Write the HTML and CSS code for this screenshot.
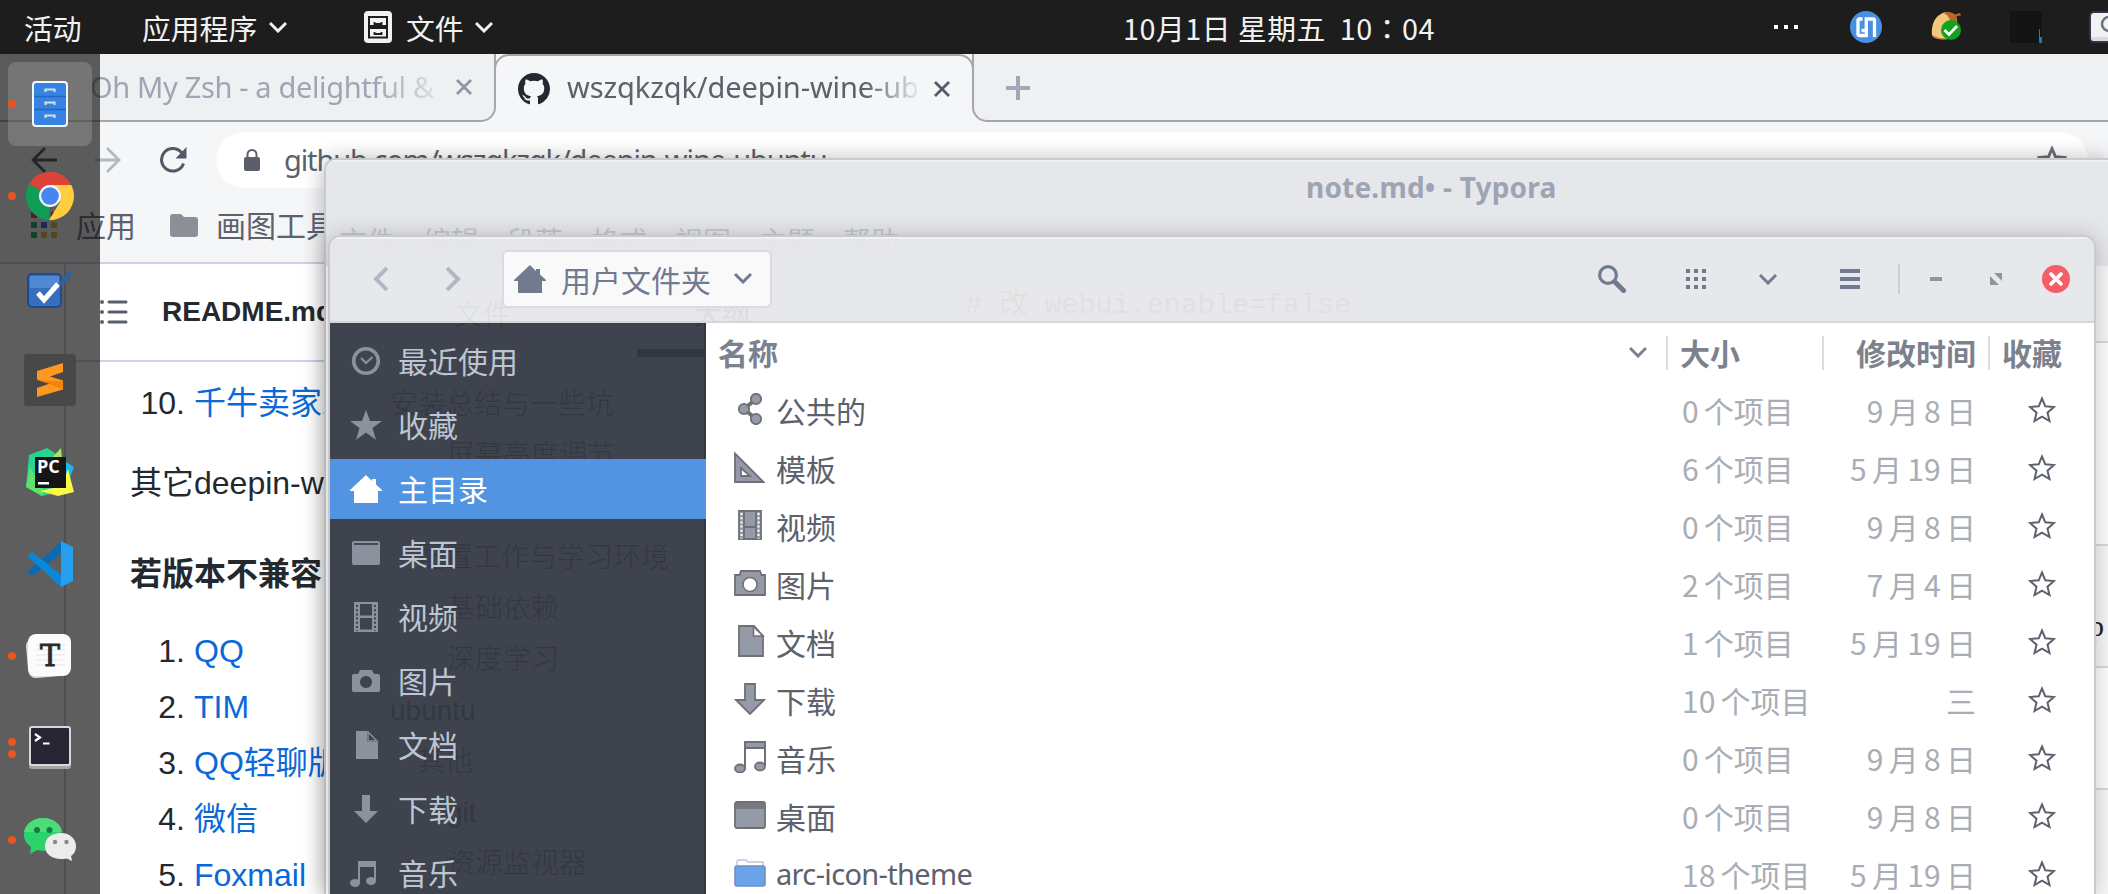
FILE: index.html
```html
<!DOCTYPE html>
<html lang="zh-CN">
<head>
<meta charset="utf-8">
<title>桌面</title>
<link rel="stylesheet" href="styles.css">
</head>
<body>
<svg class="defs" width="0" height="0">
  <symbol id="chev" viewBox="0 0 18 12"><path d="M1 2l8 8 8-8" fill="none" stroke="currentColor" stroke-width="3"/></symbol>
  <symbol id="home" viewBox="0 0 32 28"><path d="M16 0l6 6V4h4v5.500L32 15v1h-4v12H4V16H0v-1z" fill="currentColor"/></symbol>
  <symbol id="star" viewBox="0 0 28 27"><path d="M14 2.500l3.300 7.800 8.700.700-6.500 5.700 2 8.300L14 20.700 6.500 25l2-8.300L2 11l8.700-.700z" fill="none" stroke="currentColor" stroke-width="2"/></symbol>
</svg>

<header class="topbar">
  <span class="tb-act">活动</span>
  <span class="tb-apps">应用程序</span>
  <svg class="tb-chev" width="18" height="12"><use href="#chev"/></svg>
  <svg class="tb-files" width="28" height="32" viewBox="0 0 28 32"><rect width="28" height="32" rx="4" fill="#f2f2f2"/><path d="M5 6h18v9H5zM5 17h18v9.500H5z" fill="none" stroke="#1d1d1d" stroke-width="2"/><path d="M10.500 11v2h7v-2M10.500 21v2h7v-2" fill="none" stroke="#1d1d1d" stroke-width="1.800"/></svg>
  <span class="tb-title">文件</span>
  <svg class="tb-chev2" width="18" height="12"><use href="#chev"/></svg>
  <span class="tb-clock">10月1日 星期五&nbsp; 10<em lang="zh-TW">：</em>04</span>
  <svg class="tb-dots" width="24" height="4" viewBox="0 0 24 4"><path d="M0 0h4v4H0zM10 0h4v4h-4zM20 0h4v4h-4z" fill="#fff"/></svg>
  <svg class="tb-mx" width="32" height="32" viewBox="0 0 32 32"><circle cx="16" cy="16" r="16" fill="#4a90e2"/><path d="M12.500 8H9.500Q8 8 8 9.500V23q0 1.500 1.500 1.500H16.300V8H23q1.500 0 1.500 1.500V26M11.500 19.500H16" fill="none" stroke="#fff" stroke-width="3.300"/></svg>
  <svg class="tb-nut" width="30" height="30" viewBox="0 0 30 30"><path d="M10 2C3 5 0 15 1 23c1 4 9 5 16 4L24 6C20 0 14-1 10 2z" fill="#f5c67e"/><path d="M12 1c4 1 7 5 7 9h7c1-2-1-5 0-6l4-.5L29 1l-5 1.500C20-.500 16-.500 12 1z" fill="#b9682d"/><path d="M2 24q6 4 14 3" stroke="#b9682d" fill="none"/><circle cx="20" cy="18" r="10" fill="#0fa31e"/><path d="M13.500 18l4.500 4.500 8-8.500" fill="none" stroke="#fff" stroke-width="2.800"/></svg>
  <svg class="tb-box" width="32" height="32" viewBox="0 0 32 32"><path d="M0 0h32v32H0z" fill="#141414"/><path d="M29 18h1v8h2v6h-3z" fill="#0d7fd6"/></svg>
  <svg class="tb-last" width="19" height="32" viewBox="0 0 19 32"><rect x="1" y="1" width="34" height="30" rx="4" fill="#f2f2f3" stroke="#33334a" stroke-width="2"/><path d="M2 26h17v4H4z" fill="#dcdcde"/><circle cx="20" cy="13" r="7" fill="none" stroke="#6b7085" stroke-width="2.500"/></svg>
</header>

<main class="browser">
  <div class="tabstrip">
    <div class="tab idle">
      <span class="tab-name fade-a">Oh My Zsh - a delightful &amp;</span>
      <svg width="16" height="16" viewBox="0 0 16 16"><path d="M1 1l14 14M15 1L1 15" stroke="#8f96a6" stroke-width="2.800"/></svg>
    </div>
    <div class="tab live">
      <svg class="gh" width="32" height="32" viewBox="0 0 16 16"><path fill="#24292f" d="M8 0C3.580 0 0 3.580 0 8c0 3.540 2.290 6.530 5.470 7.590.4.070.55-.17.55-.38 0-.19-.01-.82-.01-1.490-2.010.37-2.530-.49-2.690-.94-.09-.23-.48-.94-.82-1.130-.28-.15-.68-.52-.01-.53.63-.01 1.080.58 1.230.82.72 1.210 1.870.87 2.330.66.07-.52.28-.87.51-1.070-1.780-.2-3.640-.89-3.640-3.950 0-.87.31-1.590.82-2.150-.08-.2-.36-1.020.08-2.120 0 0 .67-.21 2.200.82.64-.18 1.320-.27 2-.27s1.360.09 2 .27c1.530-1.040 2.200-.82 2.200-.82.44 1.100.16 1.920.08 2.120.51.56.82 1.270.82 2.150 0 3.070-1.870 3.750-3.650 3.950.29.25.54.73.54 1.480 0 1.070-.01 1.930-.01 2.200 0 .21.15.46.55.38A8.010 8.010 0 0016 8c0-4.420-3.580-8-8-8z"/></svg>
      <span class="tab-name fade-b">wszqkzqk/deepin-wine-ub</span>
      <svg width="16" height="16" viewBox="0 0 16 16"><path d="M1 1l14 14M15 1L1 15" stroke="#555b67" stroke-width="2.800"/></svg>
    </div>
    <div class="tab-rest"><svg width="24" height="24" viewBox="0 0 24 24"><path d="M0 12h24M12 0v24" stroke="#a2a8b9" stroke-width="4"/></svg></div>
  </div>
  <div class="toolbar">
    <svg class="nav-b" width="26" height="26" viewBox="0 0 26 26"><path d="M26 13H2M14 1L2 13l12 12" fill="none" stroke="#40454f" stroke-width="2.800"/></svg>
    <svg class="nav-f" width="26" height="26" viewBox="0 0 26 26"><path d="M0 13h24M12 1l12 12-12 12" fill="none" stroke="#b4b8c0" stroke-width="2.800"/></svg>
    <svg class="nav-r" width="28" height="26" viewBox="0 0 28 26"><path d="M22.500 5.500A11.300 11.300 0 1 0 24.500 16.500" fill="none" stroke="#525866" stroke-width="3"/><path d="M27.500 0v11.500H16.500z" fill="#525866"/></svg>
    <div class="omni">
      <svg width="16" height="22" viewBox="0 0 16 22"><rect y="8" width="16" height="14" rx="2" fill="#5a6069"/><path d="M3.500 9V5.500a4.500 4.500 0 0 1 9 0V9" fill="none" stroke="#5a6069" stroke-width="2"/></svg>
      <span class="url">github.com/wszqkzqk/deepin-wine-ubuntu</span>
      <svg class="omni-star" width="30" height="28" viewBox="0 0 28 27"><path d="M14 2.500l3.300 7.800 8.700.700-6.500 5.700 2 8.300L14 20.700 6.500 25l2-8.300L2 11l8.700-.700z" fill="none" stroke="#6b6e75" stroke-width="2.800"/></svg>
    </div>
  </div>
  <div class="bookmarks">
    <svg width="26" height="26" viewBox="0 0 26 26"><path d="M0 0h6v6H0zM10 0h6v6h-6zM20 0h6v6h-6z" fill="#d33"/><path d="M0 10h6v6H0zM0 20h6v6H0z" fill="#1f9a4d"/><path d="M10 10h6v6h-6z" fill="#2a54dc"/><path d="M20 10h6v6h-6zM10 20h6v6h-6zM20 20h6v6h-6z" fill="#e0b020"/></svg>
    <span class="bm-apps">应用</span>
    <svg class="bm-folder" width="28" height="24" viewBox="0 0 28 24"><path d="M3 0h8l3 3h11a3 3 0 0 1 3 3v14a3 3 0 0 1-3 3H3a3 3 0 0 1-3-3V3a3 3 0 0 1 3-3z" fill="#8b8f98"/></svg>
    <span class="bm-tools">画图工具</span>
  </div>
  <div class="page">
    <div class="readme-box">
      <div class="readme-head">
        <svg width="30" height="24" viewBox="0 0 30 24"><path d="M11 2h17M11 12h17M11 22h17" stroke="#57606a" stroke-width="3" stroke-linecap="round"/><circle cx="4" cy="2" r="2" fill="#57606a"/><circle cx="4" cy="12" r="2" fill="#57606a"/><circle cx="4" cy="22" r="2" fill="#57606a"/></svg>
        <b>README.md</b>
      </div>
      <div class="row first"><i>10.</i><a>千牛卖家工作台</a></div>
      <p class="para">其它deepin-wine</p>
      <p class="para strong">若版本不兼容</p>
      <div class="row"><i>1.</i><a>QQ</a></div>
      <div class="row"><i>2.</i><a>TIM</a></div>
      <div class="row"><i>3.</i><a>QQ轻聊版</a></div>
      <div class="row"><i>4.</i><a>微信</a></div>
      <div class="row"><i>5.</i><a>Foxmail</a></div>
    </div>
  </div>
</main>

<aside class="dock">
  <div class="slot active"><span class="pips"><u></u></span>
    <svg width="36" height="46" viewBox="0 0 36 46"><rect x="1" y="1" width="34" height="44" rx="3" fill="#3584e4" stroke="#f4f8fd" stroke-width="2"/><path d="M2 15.500h32M2 28.500h32" stroke="#1f66c4" stroke-width="1.500"/><path d="M13.500 11V8.500h9V11M13.500 24v-2.500h9V24M13.500 37v-2.500h9V37" fill="none" stroke="#dcdcdc" stroke-width="2.200"/></svg></div>
  <div class="slot"><span class="pips"><u></u></span>
    <svg width="50" height="50" viewBox="0 0 50 50"><path d="M25 25L4.200 13A24 24 0 0 1 45.800 13z" fill="#db4437"/><path d="M25 1a24 24 0 0 1 20.800 12.500H25z" fill="#db4437"/><path d="M25 25L4.200 13A24 24 0 0 0 24 49z" fill="#0f9d58"/><path d="M25 14h21.300A24 24 0 0 1 24 49L35 31z" fill="#ffcd40"/><circle cx="25" cy="25" r="11" fill="#f4f4f4"/><circle cx="25" cy="25" r="8.800" fill="#4587ee"/></svg></div>
  <div class="slot"><span class="pips"></span>
    <svg class="check" width="48" height="42" viewBox="0 0 48 42"><rect x="2" y="7" width="33" height="33" rx="4" fill="#356fbd" stroke="#1d4a91" stroke-width="2"/><path d="M4 9h29v12H4z" fill="#5089cf"/><path d="M12 26l6 7 14-16" fill="none" stroke="#fff" stroke-width="5"/><path d="M32 17L46 1l-2 10-9 8z" fill="#30609f"/></svg></div>
  <div class="slot"><span class="pips"></span>
    <svg width="52" height="52" viewBox="0 0 52 52"><rect width="52" height="52" rx="3" fill="#484848"/><path d="M13 17l26-8v9l-13 4.500 13 4v9L13 43v-9l13-4.500-13-4z" fill="#ff9820"/><path d="M13 26l26 1.500v8L26 30z" fill="#f0850c"/></svg></div>
  <div class="slot"><span class="pips"></span>
    <svg width="50" height="50" viewBox="0 0 50 50"><path d="M4 8l18-7 14 9-6 36-13 3L1 40z" fill="#29d391"/><path d="M1 40L5 20l14 24-2 5z" fill="#5de36b"/><path d="M36 1l1 12H25z" fill="#a6e85c"/><path d="M38 13l11 7-4 10-8-3z" fill="#1fb7ee"/><path d="M43 22l6 23-16 4-18-5 22-5z" fill="#fcf84a"/><path d="M10 10h31v31H10z" fill="#161616"/><path d="M13 35h11v2.500H13z" fill="#fff"/><text x="12" y="26" class="pc">PC</text></svg></div>
  <div class="slot"><span class="pips"></span>
    <svg width="48" height="48" viewBox="0 0 48 48"><path d="M1 32l5 4L36 13V1z" fill="#0a6ab4"/><path d="M6 12L1 16l34 31 1-12z" fill="#0d86d3"/><path d="M35 1l12 6v34l-12 6z" fill="#25a0f0"/></svg></div>
  <div class="slot"><span class="pips"><u></u></span>
    <svg class="sheet" width="48" height="46" viewBox="0 0 48 46"><rect x="3" y="4" width="42" height="40" rx="8" fill="#dedede" transform="rotate(-5 24 24)"/><rect x="4" y="1" width="43" height="42" rx="8" fill="#fcfcfc"/><path d="M12 12h29M12 17h29M12 22h29M12 27h29M12 32h29" stroke="#e5e5e5"/><text x="26" y="33" text-anchor="middle" class="ty">T</text></svg></div>
  <div class="slot"><span class="pips"><u></u><u></u></span>
    <svg width="42" height="44" viewBox="0 0 42 44"><rect y="2" width="42" height="41" rx="3" fill="#aaa5a2"/><rect x="1" y="1" width="40" height="38" rx="2" fill="#272434" stroke="#d8d8dc" stroke-width="2"/><path d="M6 8l5 3.500L6 15" fill="none" stroke="#fff" stroke-width="2.200"/><path d="M14 17.500h6.500" stroke="#fff" stroke-width="2"/></svg></div>
  <div class="slot"><span class="pips"><u></u></span>
    <svg width="52" height="46" viewBox="0 0 52 46"><path d="M19 1c10 0 19 7 19 17S30 34 19 34l-6-1-7 4 1-7C3 27 0 23 0 18 0 8 9 1 19 1z" fill="#2bd46b"/><path d="M19 1c10 0 18 6 19 14H0C2 6 10 1 19 1z" fill="#4cdd78"/><circle cx="13" cy="13" r="3" fill="#157c41"/><circle cx="25.500" cy="13" r="3" fill="#157c41"/><path d="M37 16c9 0 15 6 15 13 0 5-2 8-5 10l1 5-5-2.500c-2 .5-4 .5-6 .5-9 0-16-5-16-13s7-13 16-13z" fill="#ececec"/><circle cx="31" cy="25" r="2.200" fill="#8a8a8a"/><circle cx="42.500" cy="25" r="2.200" fill="#8a8a8a"/></svg></div>
</aside>

<section class="typora">
  <div class="ty-title">note.md• - Typora</div>
  <div class="ty-menu"><span>文件</span><span>编辑</span><span>段落</span><span>格式</span><span>视图</span><span>主题</span><span>帮助</span></div>
  <div class="ty-body">
    <div class="ty-side">
      <div class="ty-tabs"><span>文件</span><b>大纲</b></div>
      <div class="ty-bar"></div>
      <div class="o1">安装总结与一些坑</div>
      <div class="o3">屏幕亮度调节</div>
      <div class="o3">&nbsp;</div>
      <div class="o2">配置工作与学习环境</div>
      <div class="o3">基础依赖</div>
      <div class="o3">深度学习</div>
      <div class="o1">ubuntu</div>
      <div class="o2">其他</div>
      <div class="o3">git</div>
      <div class="o3">资源监视器</div>
    </div>
    <div class="ty-code"># 改 webui.enable=false</div>
    <div class="ty-table"><div></div><div></div><div>p</div><div></div><div></div></div>
  </div>
</section>

<section class="files">
  <div class="fhead">
    <svg class="f-b" width="15" height="24" viewBox="0 0 15 24"><path d="M14 1L3 12l11 11" fill="none" stroke="#b1b8c3" stroke-width="4"/></svg>
    <svg class="f-f" width="15" height="24" viewBox="0 0 15 24"><path d="M1 1l11 11L1 23" fill="none" stroke="#b1b8c3" stroke-width="4"/></svg>
    <div class="path"><svg width="32" height="28"><use href="#home"/></svg><span>用户文件夹</span><svg class="path-chev" width="18" height="12"><use href="#chev"/></svg></div>
    <svg class="f-search" width="28" height="28" viewBox="0 0 28 28"><circle cx="10" cy="10" r="8.400" fill="none" stroke="#727a8f" stroke-width="3.200"/><path d="M17 17l8.500 8.500" stroke="#727a8f" stroke-width="5" stroke-linecap="round"/></svg>
    <svg class="f-grid" width="20" height="20" viewBox="0 0 20 20"><path d="M0 0h4v4H0zM8 0h4v4H8zM16 0h4v4h-4zM0 8h4v4H0zM8 8h4v4H8zM16 8h4v4h-4zM0 16h4v4H0zM8 16h4v4H8zM16 16h4v4h-4z" fill="#727a8f"/></svg>
    <svg class="f-chev" width="18" height="12"><use href="#chev"/></svg>
    <svg class="f-menu" width="20" height="20" viewBox="0 0 20 20"><path d="M0 0h20v4H0zM0 8h20v4H0zM0 16h20v4H0z" fill="#727a8f"/></svg>
    <span class="f-sep"></span>
    <span class="f-min"></span>
    <svg class="f-max" width="12" height="12" viewBox="0 0 12 12"><path d="M4 0h8v8zM0 3v9h9z" fill="#90949d"/></svg>
    <svg class="f-close" width="28" height="28" viewBox="0 0 28 28"><circle cx="14" cy="14" r="14" fill="#f75d66"/><path d="M9 9l10 10M19 9L9 19" stroke="#fff" stroke-width="3.800" stroke-linecap="round"/></svg>
  </div>
  <div class="fbody">
    <nav class="side">
      <div><svg width="32" height="32" viewBox="0 0 32 32"><circle cx="16" cy="16" r="12.300" fill="none" stroke="currentColor" stroke-width="3.600"/><path d="M11 13l5 5 6.500-6" fill="none" stroke="currentColor" stroke-width="2.200"/></svg><span>最近使用</span></div>
      <div><svg width="32" height="32" viewBox="0 0 32 32"><path d="M16 1l4 11h12l-9.500 7L26 31l-10-7.500L6 31l3.500-12L0 12h12z" fill="currentColor"/></svg><span>收藏</span></div>
      <div class="sel"><svg width="32" height="28"><use href="#home"/></svg><span>主目录</span></div>
      <div><svg width="32" height="32" viewBox="0 0 32 32"><path d="M4 4h24a2 2 0 0 1 2 2v20a2 2 0 0 1-2 2H4a2 2 0 0 1-2-2V6a2 2 0 0 1 2-2z" fill="currentColor"/><path d="M4 7h24" stroke="#3e434e" stroke-width="1.800"/></svg><span>桌面</span></div>
      <div><svg width="32" height="32" viewBox="0 0 32 32"><path fill-rule="evenodd" d="M4 1h24v30H4zm6 2v11.500h12V3zm0 14v11.500h12V17z" fill="currentColor"/><path d="M7 4v26M25 4v26" stroke="#3e434e" stroke-width="2" stroke-dasharray="2 2.200"/></svg><span>视频</span></div>
      <div><svg width="32" height="32" viewBox="0 0 32 32"><path fill-rule="evenodd" d="M10 5h12l2 4h4a2 2 0 0 1 2 2v14a2 2 0 0 1-2 2H4a2 2 0 0 1-2-2V11a2 2 0 0 1 2-2h4zm6 6a6 6 0 1 0 .01 0z" fill="currentColor"/></svg><span>图片</span></div>
      <div><svg width="32" height="32" viewBox="0 0 32 32"><path d="M6 2h11v11h11v17H6z" fill="currentColor"/><path d="M18 3v9h9z" fill="none" stroke="currentColor" stroke-width="1.400"/></svg><span>文档</span></div>
      <div><svg width="32" height="32" viewBox="0 0 32 32"><path d="M12 2h8v16h8L16 30 4 18h8z" fill="currentColor"/></svg><span>下载</span></div>
      <div><svg width="32" height="32" viewBox="0 0 32 32"><path d="M8 4h18v20h-2V10H10v16H8z" fill="currentColor"/><ellipse cx="5" cy="26" rx="5" ry="4" fill="currentColor"/><ellipse cx="21" cy="24" rx="5" ry="4" fill="currentColor"/></svg><span>音乐</span></div>
    </nav>
    <div class="list">
      <div class="lhead">
        <span class="c-name">名称<svg width="18" height="12"><use href="#chev"/></svg></span>
        <span class="c-size">大小</span><span class="c-date">修改时间</span><span class="c-fav">收藏</span>
      </div>
      <div class="lrow"><svg class="ic" viewBox="0 0 32 32"><path d="M22 6L10 16l12 10" fill="none" stroke="#6e7074" stroke-width="4"/><g class="g"><circle cx="22" cy="6" r="5.200"/><circle cx="10" cy="16" r="5.200"/><circle cx="22" cy="26" r="5.200"/></g></svg><span class="n">公共的</span><span class="s">0 个项目</span><span class="d">9 月 8 日</span><svg class="st"><use href="#star"/></svg></div>
      <div class="lrow"><svg class="ic" viewBox="0 0 32 32"><path class="g" fill-rule="evenodd" d="M1 2.500v28.500h28.500zM7 17l9 8H7z"/></svg><span class="n">模板</span><span class="s">6 个项目</span><span class="d">5 月 19 日</span><svg class="st"><use href="#star"/></svg></div>
      <div class="lrow"><svg class="ic" viewBox="0 0 32 32"><path class="g" d="M5 2h22v28H5zM10 2v28M22 2v28M10 18h12"/><path d="M7.500 4v26M24.500 4v26" stroke="#fff" stroke-width="2" stroke-dasharray="2 2.200"/></svg><span class="n">视频</span><span class="s">0 个项目</span><span class="d">9 月 8 日</span><svg class="st"><use href="#star"/></svg></div>
      <div class="lrow"><svg class="ic" viewBox="0 0 32 32"><path class="g" d="M7 4h19l1.500 4H31v20H1V8h4.500z"/><circle cx="16" cy="17.500" r="7" fill="#fff" stroke="#6e7074" stroke-width="1.600"/></svg><span class="n">图片</span><span class="s">2 个项目</span><span class="d">7 月 4 日</span><svg class="st"><use href="#star"/></svg></div>
      <div class="lrow"><svg class="ic" viewBox="0 0 32 32"><path class="g" d="M5 1h15l9 10v20H5z"/><path d="M19.500 1.500v9.500H29z" fill="#fff" stroke="#6e7074" stroke-width="1.600"/></svg><span class="n">文档</span><span class="s">1 个项目</span><span class="d">5 月 19 日</span><svg class="st"><use href="#star"/></svg></div>
      <div class="lrow"><svg class="ic" viewBox="0 0 32 32"><path class="g" d="M11 1h10v16h9L16 31 2 17h9z"/></svg><span class="n">下载</span><span class="s">10 个项目</span><span class="d">三</span><svg class="st"><use href="#star"/></svg></div>
      <div class="lrow"><svg class="ic" viewBox="0 0 32 32"><path class="g" d="M11 1h20v6H11z"/><path d="M11 1v27M31 1v24" stroke="#6e7074" stroke-width="2"/><g class="g"><ellipse cx="6" cy="27.500" rx="5" ry="4"/><ellipse cx="26" cy="25.500" rx="5" ry="4"/></g></svg><span class="n">音乐</span><span class="s">0 个项目</span><span class="d">9 月 8 日</span><svg class="st"><use href="#star"/></svg></div>
      <div class="lrow"><svg class="ic" viewBox="0 0 32 32"><rect class="g" x="1" y="3" width="30" height="26" rx="2"/><path d="M2 4h28v6H2z" fill="#6e7074" opacity=".8"/></svg><span class="n">桌面</span><span class="s">0 个项目</span><span class="d">9 月 8 日</span><svg class="st"><use href="#star"/></svg></div>
      <div class="lrow"><svg class="ic" viewBox="0 0 32 32"><path d="M3 10V5q0-2 2-2h7l2 2h15v6" fill="#fff" stroke="#cdd3e0" stroke-width="1.800"/><rect x="1" y="9" width="30" height="20" rx="2" fill="#6aa3e8" stroke="#6f8fc4" stroke-width="1.600"/></svg><span class="n lat">arc-icon-theme</span><span class="s">18 个项目</span><span class="d">5 月 19 日</span><svg class="st"><use href="#star"/></svg></div>
    </div>
  </div>
</section>
</body>
</html>
```
FILE: styles.css
```css
* { box-sizing: border-box; }
body { margin: 0; width: 2108px; height: 894px; overflow: hidden; position: relative; background: #fff; font-family: "Noto Sans CJK SC", sans-serif; font-size: 30px; }
svg { display: block; flex: none; }
.defs { position: absolute; }
span, b, div, p { white-space: nowrap; }

.topbar { height: 54px; background: #1d1d1d; color: #f2f2f2; display: flex; align-items: center; font-size: 28.8px; line-height: 54px; padding: 0 0 0 24px; overflow: hidden; }
.topbar span { flex: none; padding-top: 2px; }
.tb-act { width: 118px; }
.tb-apps { width: 127px; }
.tb-files { margin-left: 77px; }
.tb-title { margin-left: 14px; width: 69px; }
.tb-clock { margin-left: 630px; width: 651px; letter-spacing: .5px; }
.tb-clock em { font-style: normal; font-family: "Noto Sans CJK TC", sans-serif; }
.tb-mx { margin-left: 52px; }
.tb-nut { margin-left: 49px; }
.tb-box { margin-left: 49px; }
.tb-last { margin-left: 47px; }

.browser { height: 840px; display: flex; flex-direction: column; }
.tabstrip { height: 68px; background: #f5f6f8; display: flex; flex: none; }
.tab { display: flex; align-items: center; flex: none; font-family: "Noto Sans", sans-serif; font-size: 29px; }
.idle { width: 496px; padding: 0 0 0 90px; background: #eff0f2; border-bottom: 2px solid #a5a6a8; border-right: 2px solid #a5a6a8; border-bottom-right-radius: 15px; color: #9ea5b5; }
.live { width: 480px; margin-left: -2px; padding: 0 0 0 22px; border-top: 2px solid #a5a6a8; border-left: 2px solid #a5a6a8; border-right: 2px solid #a5a6a8; border-radius: 15px 15px 0 0; background: #f5f6f8; color: #5c616c; height: 53px; }
.live > svg { margin-top: 14px; }
.tab-name { overflow: hidden; line-height: 44px; }
.fade-a { width: 348px; margin-right: 18px; -webkit-mask-image: linear-gradient(90deg, #000 82%, transparent 104%); letter-spacing: -.35px; }
.fade-b { width: 350px; margin: 11px 17px 0 17px; -webkit-mask-image: linear-gradient(90deg, #000 85%, transparent 102%); letter-spacing: -.1px; }
.tab-rest { flex: 1; margin-left: -2px; background: #eff0f2; border-left: 2px solid #a5a6a8; border-bottom: 2px solid #a5a6a8; border-bottom-left-radius: 15px; padding: 22px 0 0 32px; }
.toolbar { height: 76px; background: #f5f6f8; display: flex; align-items: center; flex: none; }
.nav-b { margin-left: 31px; }
.nav-f { margin-left: 38px; }
.nav-r { margin-left: 38px; }
.omni { width: 1872px; height: 56px; margin-left: 29px; border-radius: 28px; background: #fff; display: flex; align-items: center; padding: 0 21px 0 28px; }
.url { margin-left: 24px; font-family: "Noto Sans", sans-serif; font-size: 29px; color: #5c616c; letter-spacing: -1.12px; line-height: 44px; }
.omni-star { margin-left: auto; }
.bookmarks { height: 66px; background: #f5f6f8; border-bottom: 2px solid #ccd2e3; display: flex; align-items: center; padding: 0 0 10px 31px; color: #5c616c; flex: none; }
.bookmarks span { margin-top: -3px; }
.bookmarks .bm-folder { margin-top: 2px; }
.bm-apps { margin-left: 19px; width: 94px; }
.bm-tools { margin-left: 18px; }
.page { flex: 1; background: #fff; padding-left: 64px; overflow: hidden; }
.readme-box { border-left: 2px solid #c8cedd; height: 100%; color: #24292f; font-family: "Liberation Sans", "Noto Sans CJK SC", sans-serif; font-size: 32px; line-height: 56px; }
.readme-head { height: 98px; border-bottom: 2px solid #ccd2e3; display: flex; align-items: center; padding-left: 32px; font-size: 28px; }
.readme-head b { margin-left: 34px; }
.row { display: flex; height: 56px; }
.row i { font-style: normal; width: 119px; text-align: right; margin-right: 9px; }
.row a { color: #0969da; }
.first { margin-top: 13px; }
.para { margin: 24px 0 0 64px; height: 56px; }
.strong { font-weight: 700; margin: 35px 0 21px 64px; }

.dock { position: absolute; left: 0; top: 54px; width: 100px; height: 840px; background: rgba(22,22,22,.69); padding-top: 8px; display: flex; flex-direction: column; gap: 8px; overflow: hidden; }
.slot { width: 84px; height: 84px; margin-left: 8px; display: flex; align-items: center; justify-content: center; flex: none; border-radius: 8px; position: relative; }
.active { background: rgba(255,255,255,.17); }
.pips { position: absolute; left: 0; top: 0; height: 84px; display: flex; flex-direction: column; justify-content: center; gap: 4px; }
.pips u { width: 8px; height: 8px; border-radius: 50%; background: #e95420; }
.sheet { margin-left: -4px; }
.pc { font: 700 18px "Open Sans", sans-serif; fill: #fff; }
.ty { font: 30px "DejaVu Serif", serif; fill: #2b2b2b; stroke: #2b2b2b; stroke-width: .9; }

.typora { position: absolute; left: 324px; top: 158px; width: 1784px; height: 736px; border: 2px solid #c9cacc; border-right: 0; border-bottom: 0; border-radius: 12px 0 0 0; box-shadow: 0 2px 22px rgba(0,0,0,.3); background: #fff; display: flex; flex-direction: column; overflow: hidden; }
.ty-title { height: 58px; background: #e6e7ea; border-top: 2px solid #eff0f2; flex: none; padding-left: 980px; font: 700 28px/51px "Noto Sans", sans-serif; color: #9ea4b4; letter-spacing: .2px; }
.ty-menu { height: 48px; background: #e6e7ea; flex: none; display: flex; gap: 28px; padding-left: 13px; font-size: 28px; line-height: 44px; color: #c5c8d0; }
.ty-body { flex: 1; display: flex; min-height: 0; }
.ty-side { width: 440px; flex: none; color: #222; font: 300 28px/51px "Liberation Sans", "Noto Sans CJK SC", sans-serif; }
.ty-tabs { display: flex; height: 83px; padding: 25px 0 0 129px; gap: 183px; line-height: 50px; }
.ty-bar { width: 70px; height: 8px; margin: 0 0 22px 311px; background: #000; }
.o1 { padding-left: 64px; } .o2 { padding-left: 91px; } .o3 { padding-left: 121px; }
.ty-code { width: 1320px; flex: none; padding: 15px 0 0 199px; font: 28.4px/50px "Liberation Mono", "Noto Sans CJK SC", monospace; color: #a50; }
.ty-table { flex: 1; font: 30px/40px "Liberation Serif", serif; color: #222; }
.ty-table div { border-bottom: 2px solid #d8dade; background: #fff; }
.ty-table div:nth-child(1) { height: 77px; } .ty-table div:nth-child(2) { height: 203px; }
.ty-table div:nth-child(3), .ty-table div:nth-child(4), .ty-table div:nth-child(5) { height: 122px; }
.ty-table div:nth-child(odd) { background: #f8f8f8; }
.ty-table div:nth-child(3) { padding: 60px 0 0 3px; }

.files { position: absolute; left: 328px; top: 235px; width: 1768px; height: 659px; border: 2px solid #c9cacd; border-bottom: 0; border-radius: 12px 12px 0 0; box-shadow: 0 2px 24px rgba(0,0,0,.22); overflow: hidden; }
.fhead { height: 86px; background: rgba(230,231,234,.95); border-top: 2px solid #f0f1f3; border-bottom: 2px solid #d5d6da; display: flex; align-items: center; color: #727a8f; padding: 0 0 2px 43px; }
.f-f { margin-left: 58px; }
.path { margin-left: 41px; width: 270px; height: 58px; background: #f9f9fa; border: 2px solid #d9dbdf; border-radius: 6px; display: flex; align-items: center; padding-left: 10px; }
.path span { margin: 0 23px 0 15px; line-height: 50px; }
.path-chev { margin-top: -3px; }
.f-search { margin-left: 826px; } .f-grid { margin-left: 60px; } .f-chev { margin-left: 53px; } .f-menu { margin-left: 63px; }
.f-sep { width: 2px; height: 30px; background: #cdcfd3; margin-left: 38px; }
.f-min { width: 12px; height: 4px; background: #90949d; margin-left: 30px; }
.f-max { margin-left: 48px; } .f-close { margin-left: 40px; }
.fbody { display: flex; height: 571px; }
.side { width: 376px; flex: none; background: rgba(52,57,69,.95); border-right: 2px solid #343843; padding-top: 8px; color: #8b919d; }
.side div { height: 60px; margin-bottom: 4px; display: flex; align-items: center; padding-left: 20px; color: #bcc5d1; line-height: 60px; }
.side span { margin-top: -2px; }
.side svg { margin-right: 16px; color: #8b919d; }
.side .sel { background: #5294e2; color: #fff; margin-right: -2px; }
.side .sel svg { color: #fff; }
.list { flex: 1; background: #fff; }
.lhead { height: 60px; display: flex; align-items: center; font-weight: 700; color: #7b828e; }
.lhead span { border-right: 2px solid #dcdcde; height: 34px; line-height: 34px; display: flex; align-items: center; padding-bottom: 2px; }
.lhead .c-name { width: 962px; padding: 0 19px 2px 12px; justify-content: space-between; }
.lhead .c-size { width: 156px; padding-left: 12px; }
.lhead .c-date { width: 166px; padding-right: 12px; justify-content: flex-end; }
.lhead .c-fav { border: 0; padding-left: 12px; }
.lrow { height: 58px; display: flex; align-items: center; line-height: 54px; color: #a9adb5; }
.lrow span { margin-top: -4px; }
.ic { width: 32px; height: 32px; margin: -6px 10px 0 28px; }
.g { fill: #959aa9; stroke: #6e7074; stroke-width: 1.800; }
.n { width: 906px; color: #5c616c; }
.lat { font-family: "Noto Sans", sans-serif; font-size: 29px; letter-spacing: -.65px; }
.s { width: 140px; word-spacing: -1.5px; }
.d { width: 154px; text-align: right; word-spacing: -1.4px; }
.st { width: 28px; height: 27px; margin: -6px 0 0 52px; color: #5c616c; }
```
